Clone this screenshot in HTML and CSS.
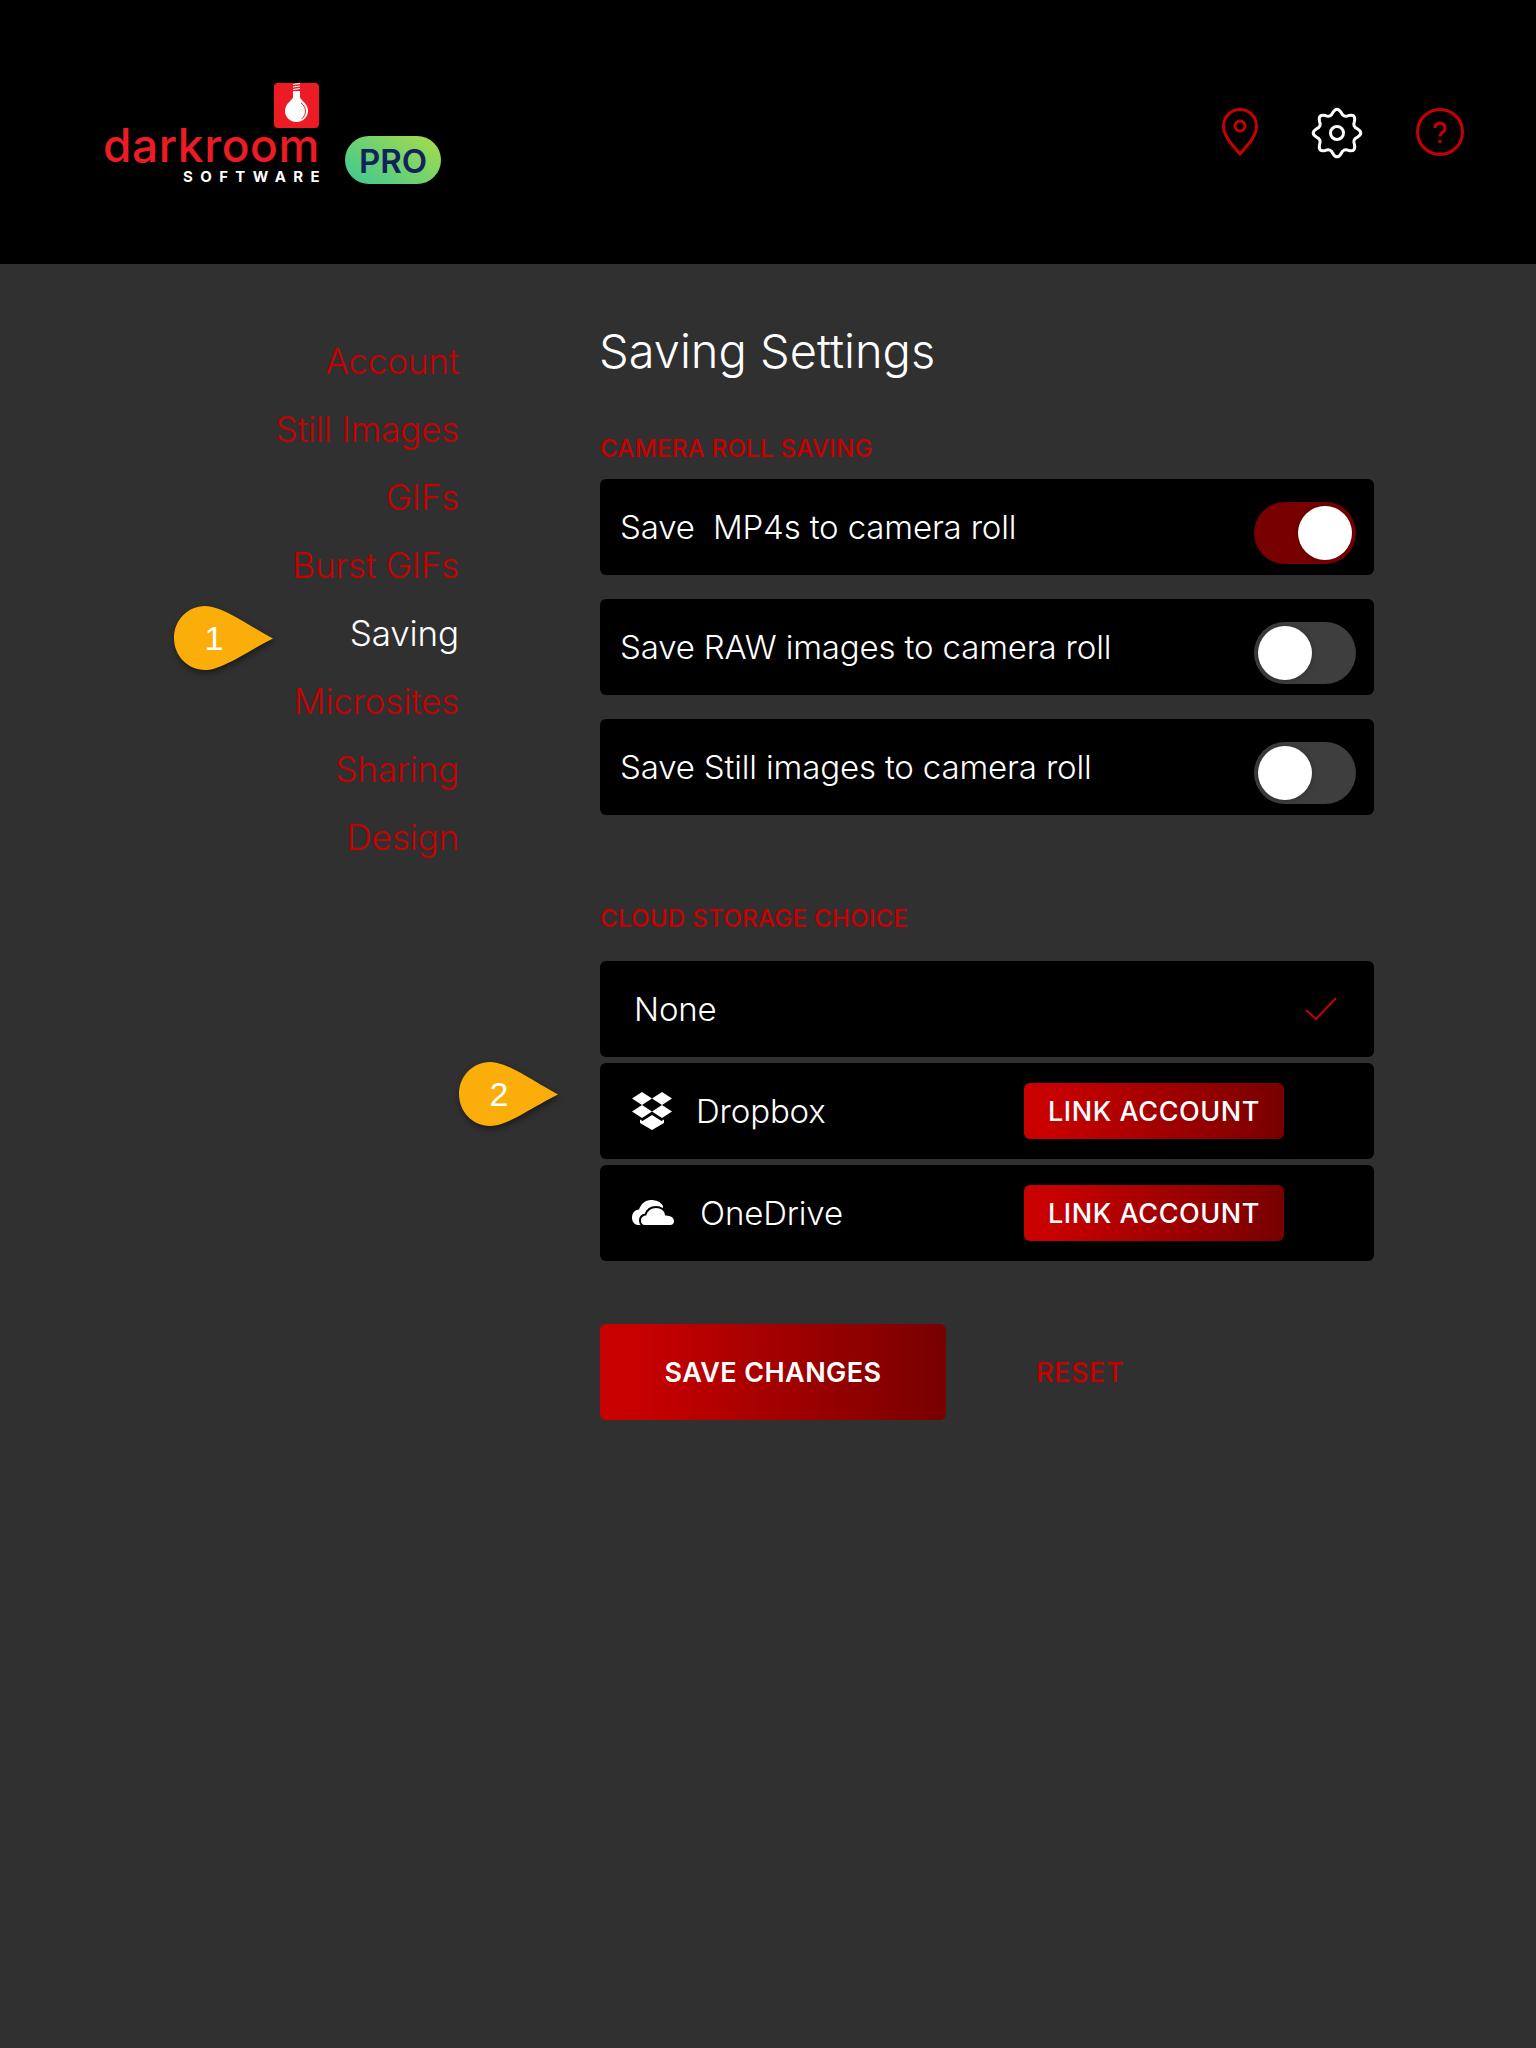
FILE: index.html
```html
<!DOCTYPE html>
<html lang="en">
  <head>
    <meta charset="UTF-8" />
    <meta name="viewport" content="width=device-width, initial-scale=1.0" />
    <title>Saving Settings</title>
    <link rel="stylesheet" href="styles.css">
  </head>
  <body>
    <div class="page">
      <header class="topbar">
        <div class="logo">
          <div class="logo-bulb">
            <svg width="45" height="45" viewBox="0 0 45 45">
              <path class="bulb-thread" d="M19 1.5l7-1M19 4l7-1M19 6.500l7-1" />
              <path class="bulb-glass" d="M19 8h7v6c0 3 8 6 8 14 0 6-5 11-11.500 11S11 34 11 28c0-8 8-11 8-14z" />
              <path class="bulb-shine" d="M27 20c3 2 4.500 5 4.500 8 0 3-1.500 6-4 8" />
            </svg>
          </div>
          <div class="logo-word">darkroom</div>
          <div class="logo-sub">SOFTWARE</div>
        </div>
        <div class="pro-badge">PRO</div>
        <div class="top-icons">
          <svg class="top-icon" width="36" height="48" viewBox="0 0 36 48">
            <path class="icon-red" d="M18 46C8 34.500 1.500 27 1.500 18a16.500 16.500 0 0 1 33 0C34.500 27 28 34.500 18 46z" />
            <circle class="icon-red" cx="18" cy="18" r="5" />
          </svg>
          <svg class="top-icon gear" width="50" height="50" viewBox="0 0 50 50">
            <path class="icon-white" d="M45.600 20.900Q52 25 45.600 29.100Q40.240 31.310 42.460 36.670Q44.090 44.090 36.670 42.460Q31.310 40.240 29.100 45.600Q25 52 20.900 45.600Q18.690 40.240 13.330 42.460Q5.910 44.090 7.540 36.670Q9.760 31.310 4.400 29.100Q-2 25 4.400 20.900Q9.760 18.690 7.540 13.330Q5.910 5.910 13.330 7.540Q18.690 9.760 20.900 4.400Q25 -2 29.100 4.400Q31.310 9.760 36.670 7.540Q44.090 5.910 42.460 13.330Q40.240 18.690 45.600 20.900Z" />
            <circle class="icon-white" cx="25" cy="25" r="6.500" />
          </svg>
          <svg class="top-icon" width="48" height="48" viewBox="0 0 48 48">
            <circle class="icon-red" cx="24" cy="24" r="22.500" />
            <path class="icon-red" d="M19 20a5 5 0 1 1 8 4c-2 1.500-3 2.500-3 4.500" />
            <circle class="icon-dot" cx="24" cy="33.500" r="1.800" />
          </svg>
        </div>
      </header>

      <main class="main">
        <nav class="sidenav">
          <a class="nav-item">Account</a>
          <a class="nav-item">Still Images</a>
          <a class="nav-item">GIFs</a>
          <a class="nav-item">Burst GIFs</a>
          <a class="nav-item active">Saving</a>
          <a class="nav-item">Microsites</a>
          <a class="nav-item">Sharing</a>
          <a class="nav-item">Design</a>
        </nav>

        <section class="content">
          <h1 class="title">Saving Settings</h1>

          <h2 class="section-label">CAMERA ROLL SAVING</h2>
          <div class="toggle-list">
            <div class="row toggle-row">
              <span class="row-text">Save  MP4s to camera roll</span>
              <div class="toggle on"><div class="knob"></div></div>
            </div>
            <div class="row toggle-row">
              <span class="row-text">Save RAW images to camera roll</span>
              <div class="toggle"><div class="knob"></div></div>
            </div>
            <div class="row toggle-row">
              <span class="row-text">Save Still images to camera roll</span>
              <div class="toggle"><div class="knob"></div></div>
            </div>
          </div>

          <h2 class="section-label cloud-label">CLOUD STORAGE CHOICE</h2>
          <div class="cloud-list">
            <div class="row none-row">
              <span class="row-text">None</span>
              <svg class="check" width="32" height="24" viewBox="0 0 32 24">
                <path d="M1 13l10 9L31 1" />
              </svg>
            </div>
            <div class="row cloud-row">
              <svg class="cloud-icon dropbox" width="40" height="38" viewBox="0 0 40 38">
                <path d="M10 0l10 6.500L10 13 0 6.500zM30 0l10 6.500L30 13l-10-6.500zM10 13l10 6.500L10 26 0 19.500zM30 13l10 6.500L30 26l-10-6.500z" />
                <path d="M20 23l9.500 6 2.500-1.500V31l-12 7-12-7v-3.500l2.500 1.500z" />
              </svg>
              <span class="row-text">Dropbox</span>
              <button class="btn link-btn">LINK ACCOUNT</button>
            </div>
            <div class="row cloud-row">
              <svg class="cloud-icon onedrive" width="43" height="26" viewBox="0 0 43 26">
                <path d="M6 25C2 25 0 21 0 17.500 0 13 3 10 7 9.500 9 4 13 0 19 0c5 0 10 2 12 6l-1 12-20 7z" />
                <path class="cloud-front" d="M13 26c-3.500 0-5-3-5-5.500 0-3.500 2.500-5.500 5.500-6C15 10 19 7 24 7c5 0 9 3 10 7.500 5 0 9 2.500 9 6.500 0 3-2 5-5 5z" />
              </svg>
              <span class="row-text">OneDrive</span>
              <button class="btn link-btn">LINK ACCOUNT</button>
            </div>
          </div>

          <div class="actions">
            <button class="btn save-btn">SAVE CHANGES</button>
            <a class="reset">RESET</a>
          </div>
        </section>
      </main>

      <div class="callout callout-one">
        <svg width="105" height="70" viewBox="0 0 105 70"><path d="M33 2C50 2 74 20 101 34.500 74 48 50 66 33 66 16 66 2 52 2 34 2 16 16 2 33 2z" /></svg>
        <span class="callout-num">1</span>
      </div>
      <div class="callout callout-two">
        <svg width="105" height="70" viewBox="0 0 105 70"><path d="M33 2C50 2 74 20 101 34.500 74 48 50 66 33 66 16 66 2 52 2 34 2 16 16 2 33 2z" /></svg>
        <span class="callout-num">2</span>
      </div>
    </div>
  </body>
</html>
```

FILE: styles.css
```css
* {
  box-sizing: border-box;
}
body {
  margin: 0;
  background-color: #303030;
  font-family: Inter, "Liberation Sans", sans-serif;
  color: white;
}
.page {
  position: relative;
  min-height: 2048px;
}

/* top bar */
.topbar {
  display: flex;
  align-items: flex-start;
  height: 264px;
  padding: 83px 72px 0 105px;
  background-color: black;
}
.logo {
  display: flex;
  flex-direction: column;
  align-items: flex-end;
  width: 215px;
}
.logo-bulb {
  width: 45px;
  height: 45px;
  margin-right: 1px;
  border-radius: 4px;
  background-color: #ed1c24;
}
.logo-bulb svg {
  display: block;
}
.bulb-thread {
  fill: none;
  stroke: white;
  stroke-width: 1.2;
}
.bulb-glass {
  fill: white;
}
.bulb-shine {
  fill: none;
  stroke: #ed1c24;
  stroke-width: 1;
}
.logo-word {
  margin: -6px 0 0 -2px;
  width: 217px;
  font-size: 46px;
  line-height: 46px;
  font-weight: 500;
  letter-spacing: 0.6px;
  color: #ed1c24;
  white-space: nowrap;
}
.logo-sub {
  margin: 1px -7px 0 0;
  font-size: 15px;
  line-height: 16px;
  font-weight: 700;
  letter-spacing: 7.4px;
  white-space: nowrap;
}
.pro-badge {
  width: 96px;
  height: 48px;
  margin: 53px 0 0 25px;
  border-radius: 24px;
  background: linear-gradient(35deg, #3cc893, #aadc4a);
  color: #10235a;
  font-size: 33px;
  line-height: 50px;
  font-weight: 600;
  text-align: center;
}
.top-icons {
  display: flex;
  align-items: flex-start;
  gap: 54px;
  margin: 25px 0 0 auto;
}
.top-icon {
  display: block;
  overflow: visible;
}
.icon-red {
  fill: none;
  stroke: #c80000;
  stroke-width: 3;
}
.icon-white {
  fill: none;
  stroke: white;
  stroke-width: 3;
}
.icon-dot {
  fill: #c80000;
}

/* main layout */
.main {
  display: flex;
}
.sidenav {
  display: flex;
  flex-direction: column;
  width: 459px;
  padding-top: 63px;
  text-align: right;
}
.nav-item {
  font-size: 35px;
  line-height: 68px;
  font-weight: 350;
  letter-spacing: -0.15px;
  color: #c80000;
}
.nav-item.active {
  color: white;
}
.content {
  width: 774px;
  margin-left: 141px;
  padding-top: 59px;
}
.title {
  margin: 0 0 0 -1px;
  font-size: 47px;
  line-height: 56px;
  font-weight: 300;
}
.section-label {
  margin: 55px 0 0;
  font-size: 24px;
  line-height: 30px;
  font-weight: 500;
  letter-spacing: 0.3px;
  color: #c80000;
}
.toggle-list {
  display: flex;
  flex-direction: column;
  gap: 24px;
  margin-top: 15px;
}
.cloud-label {
  margin-top: 89px;
}
.cloud-list {
  display: flex;
  flex-direction: column;
  gap: 6px;
  margin-top: 27px;
}
.row {
  display: flex;
  align-items: center;
  height: 96px;
  border-radius: 6px;
  background-color: black;
}
.row-text {
  font-size: 33px;
  font-weight: 300;
  letter-spacing: -0.15px;
  white-space: pre;
}
.toggle-row {
  justify-content: space-between;
  padding: 0 18px 0 20px;
}
.toggle {
  display: flex;
  width: 102px;
  height: 62px;
  margin-top: 12px;
  padding: 4px;
  border-radius: 31px;
  background-color: #3e3e3e;
}
.toggle.on {
  justify-content: flex-end;
  background-color: #780000;
}
.knob {
  width: 54px;
  height: 54px;
  border-radius: 50%;
  background-color: white;
  box-shadow: 0 0 6px rgba(0, 0, 0, 0.25);
}
.none-row {
  justify-content: space-between;
  padding: 0 37px 0 34px;
}
.check {
  fill: none;
  stroke: #c80000;
  stroke-width: 2;
}
.cloud-row {
  padding-left: 32px;
}
.cloud-icon {
  flex: none;
  fill: white;
}
.cloud-front {
  stroke: black;
  stroke-width: 2;
}
.dropbox {
  margin-right: 24px;
}
.onedrive {
  margin-right: 25px;
}
.btn {
  border: none;
  border-radius: 6px;
  background: linear-gradient(90deg, #c80000 10%, #780000);
  color: white;
  font-family: Inter, "Liberation Sans", sans-serif;
  font-size: 27px;
  font-weight: 500;
  letter-spacing: 0.55px;
  padding: 0;
}
.link-btn {
  width: 260px;
  height: 56px;
  margin-left: auto;
  margin-right: 90px;
}
.actions {
  display: flex;
  align-items: center;
  margin-top: 63px;
}
.save-btn {
  width: 346px;
  height: 96px;
  font-weight: 600;
  letter-spacing: 0.4px;
}
.reset {
  margin-left: 90px;
  font-size: 27px;
  font-weight: 500;
  letter-spacing: 0.6px;
  color: #c80000;
}

/* yellow numbered callouts sit over the page */
.callout {
  position: absolute;
  width: 105px;
  height: 70px;
}
.callout svg {
  display: block;
  fill: #fbad09;
  filter: drop-shadow(1px 3px 3px rgba(0, 0, 0, 0.45));
}
.callout-num {
  position: absolute;
  left: 10px;
  top: 2px;
  width: 64px;
  text-align: center;
  font-family: "Liberation Sans", sans-serif;
  font-size: 34px;
  line-height: 64px;
}
.callout-one {
  left: 172px;
  top: 604px;
}
.callout-two {
  left: 457px;
  top: 1060px;
}
```
